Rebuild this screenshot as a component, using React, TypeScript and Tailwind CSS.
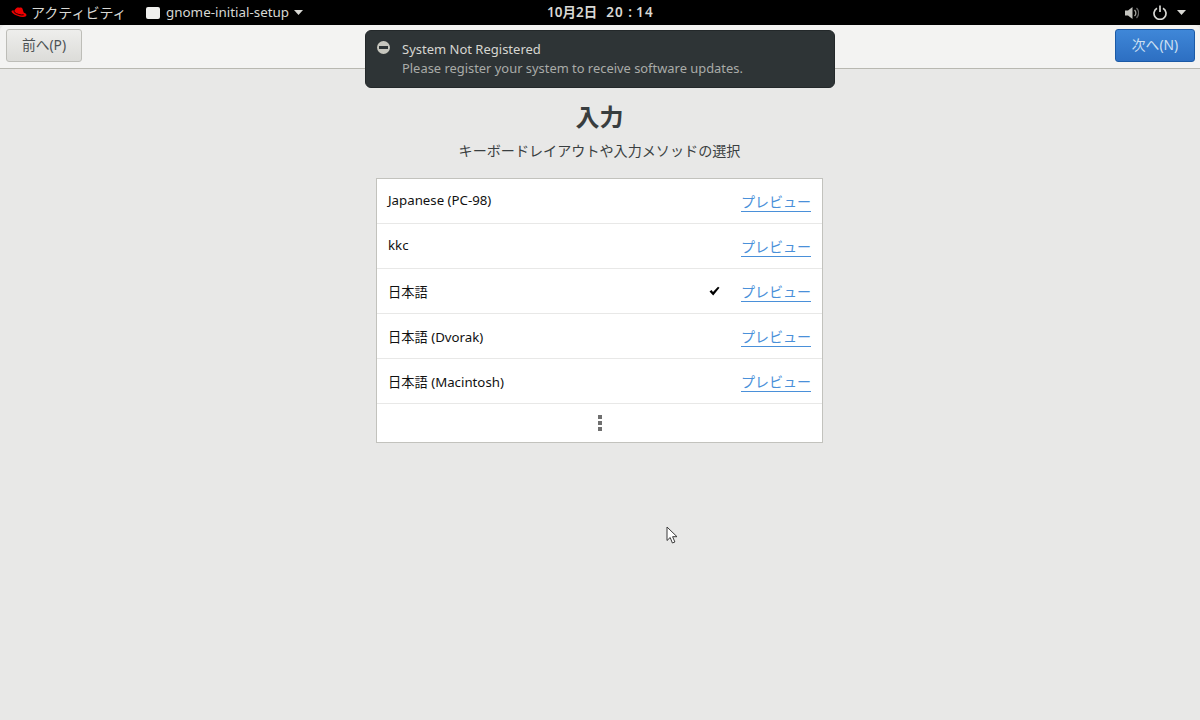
const rows = [
  { name: "Japanese (PC-98)", nudge: "" },
  { name: "kkc", nudge: "" },
  { name: "日本語", selected: true, nudge: "pt-[4px]" },
  { name: "日本語 (Dvorak)", nudge: "pt-[4px]" },
  { name: "日本語 (Macintosh)", nudge: "pt-[4px]" },
];

const App = () => {
  return (
    <div className="relative flex h-[720px] w-[1200px] flex-col overflow-hidden bg-[#e8e8e7] font-['Noto_Sans','Noto_Sans_CJK_JP',sans-serif]">
      {/* Top bar */}
      <div className="relative flex h-[25px] shrink-0 items-center bg-black text-[14px] text-[#d8d8d4]">
        <svg className="ml-[11px] h-[11px] w-[16px]" viewBox="0 0 16 11">
          <path d="M5.500 1C7 0 8.500 1 9.500.6 10.800.2 11.600 1.500 12 3.200c.3 1 .5 1.800.7 2.300C14 6 15.500 6.800 15.500 8c0 1.300-1.500 2-3.500 2C8.500 10 4 8.200 1.800 6.300 1 5.600.5 5 .5 4.300.5 3.300 2 3.200 3.300 3.800 3.800 2.800 4.500 1.700 5.500 1z" fill="#ee0000" />
          <path d="M3.300 3.800c-.2.600-.2 1.200.4 1.700 2 1.500 6 3 9 2.300" stroke="#000" strokeWidth="0.900" fill="none" />
        </svg>
        <span className="ml-[4px] w-[115px]">アクティビティ</span>
        <svg className="h-[12px] w-[14px]" viewBox="0 0 14 12">
          <path d="M2 0h10a2 2 0 0 1 2 2v8a2 2 0 0 1-2 2H2a2 2 0 0 1-2-2V2a2 2 0 0 1 2-2z" fill="#f0f0ee" />
        </svg>
        <span className="ml-[6px] text-[13.4px]">gnome-initial-setup</span>
        <svg className="ml-[5px] h-[5px] w-[9px]" viewBox="0 0 9 5">
          <path d="M0 0h9L4.500 5z" fill="#d8d8d4" />
        </svg>
        <div className="absolute left-[547px] top-0 flex h-[25px] items-center text-[13.5px] font-semibold">
          <span>10月2日</span>
          <span className="ml-[9px] tracking-[1.200px]">20</span>
          <span className="w-[12px] text-center">:</span>
          <span className="tracking-[1.200px]">14</span>
        </div>
        <div className="ml-auto flex items-center">
          <svg className="h-[14px] w-[14px]" viewBox="0 0 14 14" fill="none">
            <path d="M0 4.500h3L7.500 1v12L3 9.500H0z" fill="#c4c4bf" />
            <path d="M9.500 4a4 4 0 0 1 0 6" stroke="#a8a8a3" strokeWidth="1.300" />
            <path d="M11.500 2a7 7 0 0 1 0 10" stroke="#666" strokeWidth="1.300" />
          </svg>
          <svg className="ml-[14px] h-[15px] w-[14px]" viewBox="0 0 14 15" fill="none" stroke="#d8d8d4" strokeWidth="1.700">
            <path d="M4 3.200a6 6 0 1 0 6 0" />
            <path d="M7 0.500v6.500" />
          </svg>
          <svg className="ml-[10px] mr-[14px] h-[5px] w-[9px]" viewBox="0 0 9 5">
            <path d="M0 0h9L4.500 5z" fill="#d8d8d4" />
          </svg>
        </div>
      </div>

      {/* Header */}
      <div className="flex h-[44px] shrink-0 items-center justify-between rounded-t-[6px] border-b border-b-[#b8b8b1] bg-[#f3f3f2] pb-[2px] pl-[6px] pr-[5px] text-[13.8px] text-[#4d5254]">
        <button className="h-[33px] w-[76px] rounded-[3px] border border-[#bdbdb8] bg-gradient-to-b from-[#eeeeec] to-[#dcdcd9]">
          前へ(P)
        </button>
        <button className="h-[33px] w-[80px] rounded-[3px] border border-[#1b5aa6] bg-gradient-to-b from-[#3f87d8] to-[#2d6fc2] text-[#cfe0f2]">
          次へ(N)
        </button>
      </div>

      {/* Notification */}
      <div className="absolute left-[365px] top-[30px] h-[58px] w-[470px] rounded-[6px] border border-[#23282a] bg-[#2e3436] pl-[36px] pt-[9px] text-[12.9px] leading-[19px]">
        <div className="absolute left-[11px] top-[10px] flex h-[13px] w-[13px] items-center justify-center rounded-full bg-[#c6c6be]">
          <div className="h-[3px] w-[9px] bg-[#2e3436]" />
        </div>
        <div className="text-[13px] text-[#d6d6d1]">System Not Registered</div>
        <div className="text-[#a9aba8]">Please register your system to receive software updates.</div>
      </div>

      {/* Content */}
      <main className="flex flex-1 flex-col items-center pr-[1px]">
        <h1 className="mt-[31px] h-[34px] text-[24px] font-bold leading-[34px] text-[#383d3f]">入力</h1>
        <p className="mt-[7px] h-[20px] text-[14.1px] leading-[20px] text-[#3a3f41]">
          キーボードレイアウトや入力メソッドの選択
        </p>
        <div className="mt-[17px] w-[447px] border border-[#c2c2bd] bg-white text-[13.25px]">
          {rows.map((row) => (
            <div key={row.name} className="flex h-[45px] items-center border-b border-b-[#e8e8e7] px-[11px]">
              <span className={`flex-1 text-[#111] ${row.nudge}`}>{row.name}</span>
              {row.selected && (
                <svg className="mr-[21px] h-[10px] w-[11px]" viewBox="0 0 11 10">
                  <path d="M0.500 5.500L2.500 4l1.500 2L9 .8l1.500 1L4.200 9.500z" fill="#000" />
                </svg>
              )}
              <a className="text-[14px] text-[#4a90d9] underline underline-offset-[4px]" href="#">
                プレビュー
              </a>
            </div>
          ))}
          <div className="flex h-[38px] flex-col items-center justify-center gap-[2px]">
            <div className="h-[4px] w-[4px] bg-[#6f6f6f]" />
            <div className="h-[4px] w-[4px] bg-[#6f6f6f]" />
            <div className="h-[4px] w-[4px] bg-[#6f6f6f]" />
          </div>
        </div>
      </main>

      {/* Mouse cursor */}
      <svg className="absolute left-[666px] top-[526px] h-[19px] w-[13px]" viewBox="0 0 13 19">
        <path d="M1 1v13.500l3.200-3 2.200 5.500 2.500-1-2.300-5.300H11z" fill="#fff" stroke="#3a3a3a" strokeWidth="1" />
      </svg>
    </div>
  );
};

export default App;
